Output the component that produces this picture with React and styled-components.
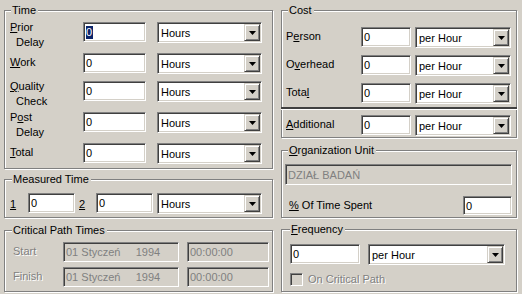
import React from 'react';
import styled, { createGlobalStyle } from 'styled-components';

const Global = createGlobalStyle`
  html, body { margin: 0; padding: 0; background: #d4d0c8; }
  body { font-family: "Liberation Sans", Arial, sans-serif; font-size: 11px; color: #000; }
  * { box-sizing: border-box; }
  u { text-decoration-thickness: 1px; text-underline-offset: 1px; }
`;

const Page = styled.div`
  width: 522px;
  height: 294px;
  background: #d4d0c8;
  display: grid;
  grid-template-columns: 270px 237px;
  column-gap: 7px;
  align-items: start;
  padding: 10px 0 0 4px;
`;

const Column = styled.div`
  display: flex;
  flex-direction: column;
`;

const Group = styled.div`
  position: relative;
  height: ${p => p.$h}px;
  margin: ${p => p.$mt || 0}px 1px 1px 0;
  padding: ${p => p.$pad};
  border: 1px solid #808080;
  box-shadow: inset 1px 1px 0 #fff, 1px 1px 0 #fff;
`;

const Title = styled.div`
  position: absolute;
  top: -7px;
  left: ${p => p.$left || 6}px;
  padding: 0 2px 0 1px;
  line-height: 13px;
  background: #d4d0c8;
  color: #000;
  white-space: nowrap;
`;

const Row = styled.div`
  display: flex;
  align-items: flex-start;
  height: ${p => (p.$h ? `${p.$h}px` : 'auto')};
  margin-top: ${p => p.$mt || 0}px;
`;

const Label = styled.div`
  flex: none;
  width: ${p => p.$w}px;
  margin-left: ${p => p.$ml || 0}px;
  margin-top: ${p => p.$mt || 0}px;
  line-height: 15px;
  white-space: nowrap;
  color: ${p => (p.$disabled ? '#808080' : '#000')};
  text-shadow: ${p => (p.$disabled ? '1px 1px 0 #fff' : 'none')};
`;

const Indent = styled.div`
  padding-left: 6px;
`;

const Field = styled.div`
  flex: none;
  width: ${p => p.$w}px;
  height: ${p => p.$h || 20}px;
  margin-left: ${p => p.$ml || 0}px;
  display: flex;
  align-items: center;
  padding: 0 2px;
  white-space: pre;
  background: ${p => (p.$disabled ? '#d4d0c8' : '#fff')};
  color: ${p => (p.$disabled ? '#808080' : '#000')};
  border: 1px solid;
  border-color: #808080 #fff #fff #808080;
  box-shadow: inset 1px 1px 0 #404040, inset -1px -1px 0 #d4d0c8;
`;

const Selected = styled.span`
  background: #0a246a;
  color: #fff;
  line-height: 13px;
  padding: 0 1px 0 0;
`;

const Combo = styled.div`
  flex: none;
  width: ${p => p.$w}px;
  height: 21px;
  margin-left: ${p => p.$ml || 0}px;
  display: flex;
  align-items: center;
  padding: 1px;
  background: #fff;
  border: 1px solid;
  border-color: #808080 #fff #fff #808080;
  box-shadow: inset 1px 1px 0 #404040, inset -1px -1px 0 #d4d0c8;
`;

const ComboText = styled.span`
  flex: 1;
  padding-left: 2px;
  white-space: nowrap;
`;

const DropButton = styled.span`
  flex: none;
  width: 16px;
  height: 17px;
  display: flex;
  align-items: center;
  justify-content: center;
  background: #d4d0c8;
  border: 1px solid;
  border-color: #d4d0c8 #404040 #404040 #d4d0c8;
  box-shadow: inset 1px 1px 0 #fff, inset -1px -1px 0 #808080;
`;

const Separator = styled.div`
  height: 3px;
  margin: 0 -1px 5px -5px;
  border-top: 2px solid #404040;
  border-bottom: 1px solid #fff;
`;

const CheckBox = styled.span`
  flex: none;
  width: 13px;
  height: 13px;
  background: #d4d0c8;
  border: 1px solid;
  border-color: #808080 #fff #fff #808080;
  box-shadow: inset 1px 1px 0 #404040, inset -1px -1px 0 #d4d0c8;
`;

const CheckRow = styled.div`
  display: flex;
  align-items: center;
  gap: 5px;
  margin-top: ${p => p.$mt || 0}px;
  margin-left: 0;
`;

const Arrow = () => (
  <svg width="7" height="4" viewBox="0 0 7 4">
    <path d="M0 0h7L3.5 4z" fill="#000" />
  </svg>
);

const Select = ({ w, ml, children }) => (
  <Combo $w={w} $ml={ml}>
    <ComboText>{children}</ComboText>
    <DropButton>
      <Arrow />
    </DropButton>
  </Combo>
);

const TimeRow = ({ h, label, mt, value = '0', selected }) => (
  <Row $h={h}>
    <Label $w={73} $mt={mt}>{label}</Label>
    <Field $w={63}>{selected ? <Selected>{value}</Selected> : value}</Field>
    <Select w={105} ml={11}>Hours</Select>
  </Row>
);

const CostRow = ({ h, label }) => (
  <Row $h={h}>
    <Label $w={75} $mt={2}>{label}</Label>
    <Field $w={50}>0</Field>
    <Select w={96} ml={4}>per Hour</Select>
  </Row>
);

export default function App() {
  return (
    <>
      <Global />
      <Page>
        <Column>
          <Group $h={159} $pad="11px 0 0 5px">
            <Title>Time</Title>
            <TimeRow
              h={31}
              mt={-2}
              selected
              label={<><u>P</u>rior<Indent>Delay</Indent></>}
            />
            <TimeRow h={28} mt={2} label={<><u>W</u>ork</>} />
            <TimeRow h={31} mt={-2} label={<><u>Q</u>uality<Indent>Check</Indent></>} />
            <TimeRow h={31} mt={-2} label={<>P<u>o</u>st<Indent>Delay</Indent></>} />
            <TimeRow h={20} mt={2} label={<><u>T</u>otal</>} />
          </Group>

          <Group $mt={9} $h={39} $pad="13px 0 0 5px">
            <Title $left={7}>Measured Time</Title>
            <Row>
              <Label $w={18} $mt={4}><u>1</u></Label>
              <Field $w={47}>0</Field>
              <Label $w={17} $ml={4} $mt={4}><u>2</u></Label>
              <Field $w={57}>0</Field>
              <Select w={105} ml={4}>Hours</Select>
            </Row>
          </Group>

          <Group $mt={11} $h={62} $pad="11px 0 0 8px">
            <Title $left={7}>Critical Path Times</Title>
            <Row $h={25}>
              <Label $w={50} $mt={2} $disabled>Start</Label>
              <Field $w={116} $disabled>{'01 Styczeń     1994'}</Field>
              <Field $w={82} $ml={8} $disabled>00:00:00</Field>
            </Row>
            <Row $h={25}>
              <Label $w={50} $mt={2} $disabled>Finish</Label>
              <Field $w={116} $disabled>{'01 Styczeń     1994'}</Field>
              <Field $w={82} $ml={8} $disabled>00:00:00</Field>
            </Row>
          </Group>
        </Column>

        <Column>
          <Group $h={128} $pad="16px 0 0 4px">
            <Title>Cost</Title>
            <CostRow h={28} label={<>P<u>e</u>rson</>} />
            <CostRow h={28} label={<>O<u>v</u>erhead</>} />
            <CostRow h={24} label={<>Tota<u>l</u></>} />
            <Separator />
            <CostRow h={20} label={<><u>A</u>dditional</>} />
          </Group>

          <Group $mt={11} $h={68} $pad="13px 0 0 3px">
            <Title><u>O</u>rganization Unit</Title>
            <Field $w={227} $h={21} $disabled>DZIAŁ BADAŃ</Field>
            <Row $mt={11}>
              <Label $w={174} $ml={4} $mt={2}><u>%</u> Of Time Spent</Label>
              <Field $w={49} $h={19}>0</Field>
            </Row>
          </Group>

          <Group $mt={10} $h={63} $pad="14px 0 0 8px">
            <Title $left={8}><u>F</u>requency</Title>
            <Row>
              <Field $w={70}>0</Field>
              <Select w={137} ml={8}>per Hour</Select>
            </Row>
            <CheckRow $mt={7}>
              <CheckBox />
              <Label $disabled>On Critical Path</Label>
            </CheckRow>
          </Group>
        </Column>
      </Page>
    </>
  );
}
